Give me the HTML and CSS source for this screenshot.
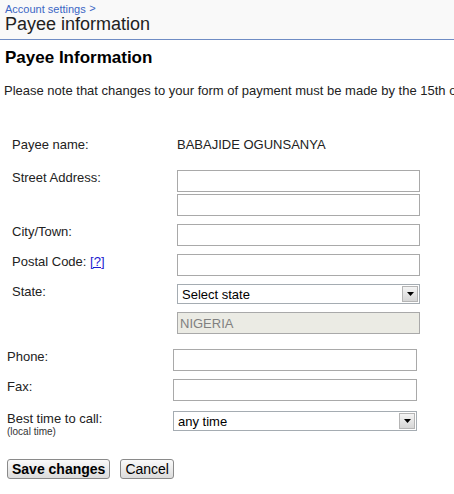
FILE: index.html
```html
<!DOCTYPE html>
<html>
<head>
<meta charset="utf-8">
<link rel="stylesheet" href="styles.css">
</head>
<body>
<div class="header">
  <a class="crumb" href="#">Account settings</a> <span class="crumb-sep">&gt;</span>
  <div class="page-title">Payee information</div>
</div>
<h2 class="section-title">Payee Information</h2>
<p class="note">Please note that changes to your form of payment must be made by the 15th of the month to take effect.</p>

<div class="form form-address">
  <div class="label label-payee">Payee name:</div>
  <div class="value value-payee">BABAJIDE OGUNSANYA</div>

  <div class="label">Street Address:</div>
  <div class="stack">
    <input class="field" type="text">
    <input class="field" type="text">
  </div>

  <div class="label">City/Town:</div>
  <input class="field" type="text">

  <div class="label">Postal Code: <a class="help" href="#">[?]</a></div>
  <input class="field" type="text">

  <div class="label">State:</div>
  <div class="select-box">
    <span class="select-text">Select state</span>
    <span class="select-arrow"><svg width="7" height="4" viewBox="0 0 7 4"><path d="M0 0H7L3.5 4Z" fill="#000"/></svg></span>
  </div>

  <div class="label"></div>
  <input class="field field-disabled" type="text" value="NIGERIA" disabled>
</div>

<div class="form form-contact">
  <div class="label">Phone:</div>
  <input class="field" type="text">

  <div class="label">Fax:</div>
  <input class="field" type="text">

  <div class="label label-time">Best time to call:<span class="sub">(local time)</span></div>
  <div class="select-box">
    <span class="select-text">any time</span>
    <span class="select-arrow"><svg width="7" height="4" viewBox="0 0 7 4"><path d="M0 0H7L3.5 4Z" fill="#000"/></svg></span>
  </div>
</div>

<div class="actions">
  <button class="btn btn-primary" type="button">Save changes</button>
  <button class="btn" type="button">Cancel</button>
</div>
</body>
</html>
```
FILE: styles.css
```css
html, body {
  margin: 0;
  padding: 0;
  background: #fff;
  overflow: hidden;
}
body {
  font-family: Arial, "Liberation Sans", sans-serif;
  font-size: 13px;
  color: #222;
}
.header {
  background: #f9f9f9;
  border-bottom: 1px solid #6f8cc4;
  padding-left: 5px;
  box-sizing: border-box;
  height: 40px;
}
.crumb {
  font-size: 11px;
  color: #3b66c4;
  text-decoration: none;
  line-height: 13px;
  position: relative;
  top: 1px;
}
.crumb-sep {
  font-size: 11px;
  color: #3b66c4;
}
.page-title {
  font-size: 18px;
  line-height: 20px;
  color: #222;
  margin-top: -1px;
}
.section-title {
  font-size: 17px;
  font-weight: bold;
  color: #000;
  margin: 8px 0 0 5px;
  line-height: 20px;
}
.note {
  margin: 15px 0 0 4px;
  line-height: 15px;
  white-space: nowrap;
  overflow: hidden;
  color: #222;
}
.form {
  display: grid;
  row-gap: 8px;
  align-items: start;
}
.form-address {
  margin-top: 39px;
  padding-left: 12px;
  grid-template-columns: 165px 243px;
}
.form-contact {
  margin-top: 15px;
  padding-left: 7px;
  grid-template-columns: 166px 244px;
}
.label {
  line-height: 15px;
  color: #222;
}
.label-payee, .value-payee {
  margin-bottom: 10px;
}
.value {
  line-height: 15px;
  color: #222;
}
.stack {
  display: flex;
  flex-direction: column;
  gap: 2px;
}
.field {
  box-sizing: border-box;
  height: 22px;
  width: 100%;
  border: 1px solid #a9a9a9;
  margin: 0;
  padding: 1px 2px;
  font-family: Arial, "Liberation Sans", sans-serif;
  font-size: 13px;
  background: #fff;
  display: block;
}
.field-disabled {
  background: #ebebe4;
  color: #808080;
  padding-left: 2px;
  font-size: 13px;
}
.help {
  color: #1a1ad0;
  text-decoration: underline;
}
.select-box {
  box-sizing: border-box;
  height: 20px;
  border: 1px solid #a5acb2;
  display: flex;
  align-items: center;
  background: #fff;
}
.select-text {
  flex: 1;
  padding-left: 4px;
  font-size: 13px;
  color: #000;
}
.select-arrow {
  box-sizing: border-box;
  width: 16px;
  height: 16px;
  margin-right: 1px;
  border: 1px solid #b5b5b5;
  background: linear-gradient(#f4f4f4, #d6d6d6);
  display: flex;
  align-items: center;
  justify-content: center;
}
.form-contact .select-box {
  margin-top: 2px;
}
.label-time {
  margin-top: 2px;
}
.sub {
  display: block;
  font-size: 10px;
  line-height: 12px;
  color: #333;
}
.actions {
  display: flex;
  gap: 10px;
  margin-top: 21px;
  padding-left: 7px;
}
.btn {
  box-sizing: border-box;
  height: 20px;
  padding: 0 4px;
  font-family: Arial, "Liberation Sans", sans-serif;
  font-size: 14px;
  color: #000;
  border: 1px solid #8a8a8a;
  border-radius: 3px;
  background: linear-gradient(#fafafa, #dcdcdc);
  line-height: 17px;
}
.btn-primary {
  font-weight: bold;
}
```
